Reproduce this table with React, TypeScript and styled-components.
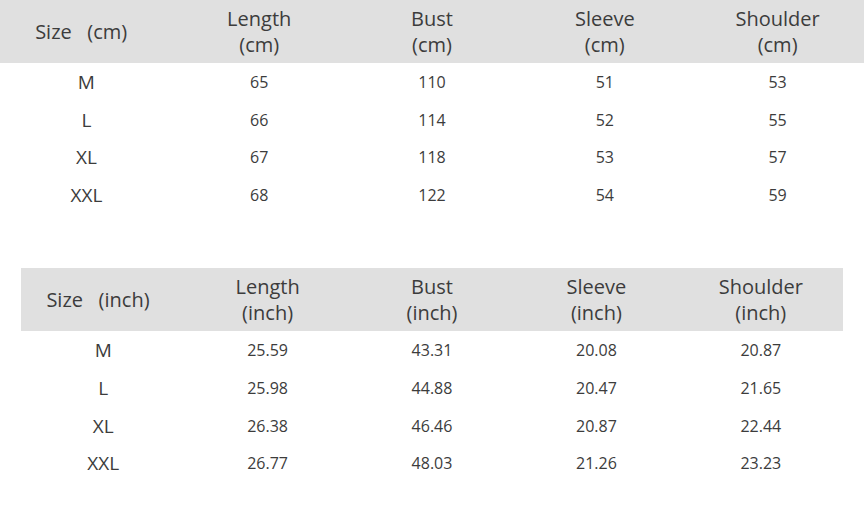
import styled, { createGlobalStyle } from "styled-components";

const GlobalStyle = createGlobalStyle`
  html, body {
    margin: 0;
    padding: 0;
    background: #ffffff;
  }
  body {
    font-family: "Open Sans", "Noto Sans CJK SC", sans-serif;
    color: #3c3c3c;
  }
`;

const Page = styled.div`
  width: 864px;
  height: 516px;
  overflow: hidden;
`;

const Table = styled.div<{ $inset: number; $top: number }>`
  display: grid;
  grid-template-columns: repeat(5, 1fr);
  margin: ${(p) => p.$top}px ${(p) => p.$inset}px 0;
`;

const HeadCell = styled.div`
  height: 63px;
  background: #e0e0e0;
  display: flex;
  align-items: center;
  justify-content: center;
  text-align: center;
  font-size: 20px;
  line-height: 26px;
  white-space: pre-wrap;
`;

const SizeCell = styled.div`
  height: 37.8px;
  display: flex;
  align-items: center;
  justify-content: center;
  font-size: 19px;
`;

const ValueCell = styled(SizeCell)`
  font-size: 16px;
`;

type Chart = {
  unit: string;
  inset: number;
  top: number;
  rows: [string, string, string, string, string][];
};

const charts: Chart[] = [
  {
    unit: "cm",
    inset: 0,
    top: 0,
    rows: [
      ["M", "65", "110", "51", "53"],
      ["L", "66", "114", "52", "55"],
      ["XL", "67", "118", "53", "57"],
      ["XXL", "68", "122", "54", "59"],
    ],
  },
  {
    unit: "inch",
    inset: 21,
    top: 54,
    rows: [
      ["M", "25.59", "43.31", "20.08", "20.87"],
      ["L", "25.98", "44.88", "20.47", "21.65"],
      ["XL", "26.38", "46.46", "20.87", "22.44"],
      ["XXL", "26.77", "48.03", "21.26", "23.23"],
    ],
  },
];

const measures = ["Length", "Bust", "Sleeve", "Shoulder"];

function SizeTable({ chart }: { chart: Chart }) {
  return (
    <Table $inset={chart.inset} $top={chart.top}>
      <HeadCell>{`Size\u00a0\u00a0\u00a0(${chart.unit})\u00a0\u00a0`}</HeadCell>
      {measures.map((m) => (
        <HeadCell key={m}>{`${m}\n(${chart.unit})`}</HeadCell>
      ))}
      {chart.rows.map((row) =>
        row.map((v, i) =>
          i === 0 ? (
            <SizeCell key={row[0] + i}>{v}</SizeCell>
          ) : (
            <ValueCell key={row[0] + i}>{v}</ValueCell>
          ),
        ),
      )}
    </Table>
  );
}

export default function App() {
  return (
    <Page>
      <GlobalStyle />
      {charts.map((c) => (
        <SizeTable key={c.unit} chart={c} />
      ))}
    </Page>
  );
}
